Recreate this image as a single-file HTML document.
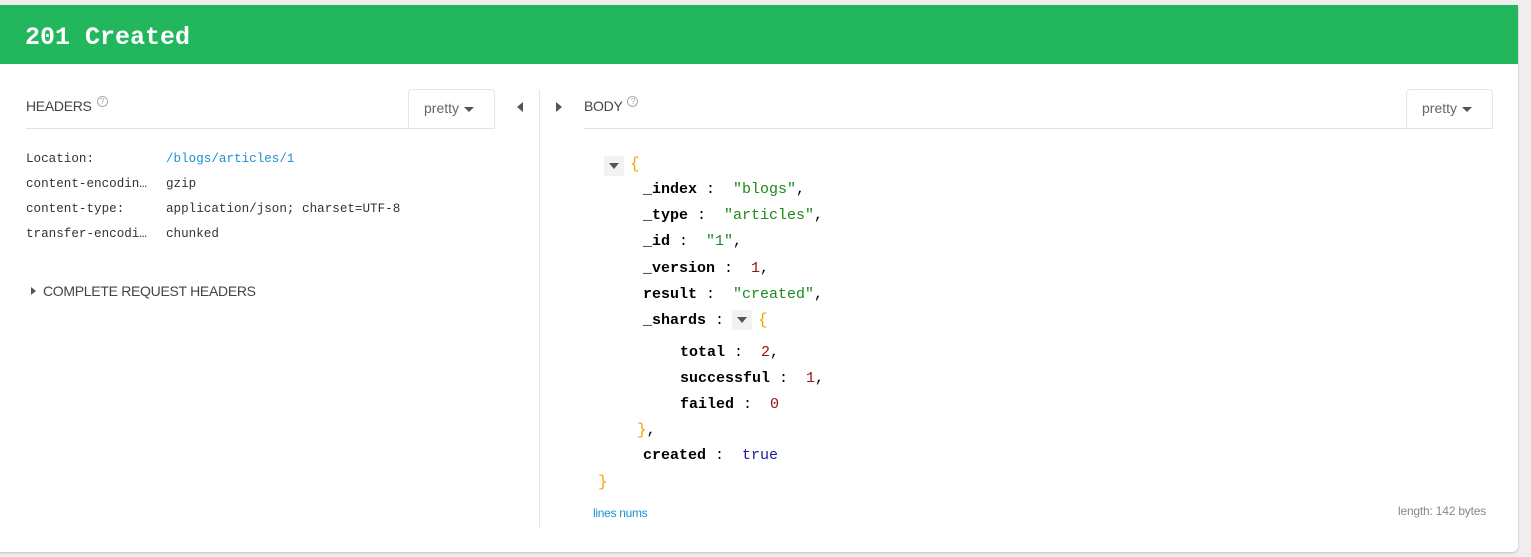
<!DOCTYPE html>
<html><head><meta charset="utf-8"><style>
*{margin:0;padding:0;box-sizing:border-box}
body{width:1531px;height:557px;background:#eeeeee;position:relative;overflow:hidden;font-family:"Liberation Sans",sans-serif}
.card{position:absolute;left:0;top:5px;width:1518px;height:547px;background:#fff;border-radius:0 0 6px 0;box-shadow:0 1px 2px rgba(0,0,0,.2)}
.green{position:absolute;left:0;top:5px;width:1518px;height:59px;background:#22b65d}
.green span{position:absolute;left:25px;top:18px;font-family:"Liberation Mono",monospace;font-weight:bold;font-size:25px;color:#fff}
.a{position:absolute;white-space:nowrap}
.lbl{font-size:14px;color:#444;letter-spacing:-0.3px}
.q{display:inline-block;width:11px;height:11px;border:1px solid #aaa;border-radius:50%;font-size:8px;color:#aaa;text-align:center;line-height:9px;vertical-align:top;margin-left:5px;margin-top:-2px}
.btn{position:absolute;border:1px solid #e6e6e6;border-bottom:none;border-radius:4px 4px 0 0;background:#fff;font-size:14px;color:#666}
.caret{display:inline-block;width:0;height:0;border-left:5px solid transparent;border-right:5px solid transparent;border-top:5px solid #555;vertical-align:middle;margin-left:5px}
.line{position:absolute;height:1px;background:#e3e3e3}
.hm{font-family:"Liberation Mono",monospace;font-size:12.6px;color:#333}
.j{position:absolute;font-family:"Liberation Mono",monospace;font-size:15px;white-space:pre;color:#000}
.k{font-weight:bold}.s{color:#1a8a1a}.n{color:#9a1010}.b{color:#1a1aa0}.br{color:#f5a500;font-size:16px}
.tog{display:inline-block;width:20px;height:20px;background:#f2f2f2;position:absolute}
.tog:after{content:"";position:absolute;left:5px;top:7px;border-left:5px solid transparent;border-right:5px solid transparent;border-top:6px solid #555}
</style></head><body>
<div class="card"></div>
<div class="green"><span>201 Created</span></div>

<div class="a lbl" style="left:26px;top:98px">HEADERS<span class="q">?</span></div>
<div class="btn" style="left:408px;top:89px;width:87px;height:40px;padding:10px 0 0 15px">pretty<span class="caret"></span></div>
<div class="line" style="left:26px;top:128px;width:469px"></div>
<div class="a" style="left:517px;top:102px;border-top:5px solid transparent;border-bottom:5px solid transparent;border-right:6px solid #555"></div>
<div class="a" style="left:539px;top:90px;width:1px;height:437px;background:#e6e6e6"></div>
<div class="a" style="left:556px;top:102px;border-top:5px solid transparent;border-bottom:5px solid transparent;border-left:6px solid #555"></div>

<div class="a hm" style="left:26px;top:152px">Location:</div><div class="a hm" style="left:166px;top:152px;color:#1a8fd6">/blogs/articles/1</div>
<div class="a hm" style="left:26px;top:177px">content-encodin…</div><div class="a hm" style="left:166px;top:177px">gzip</div>
<div class="a hm" style="left:26px;top:202px">content-type:</div><div class="a hm" style="left:166px;top:202px">application/json; charset=UTF-8</div>
<div class="a hm" style="left:26px;top:227px">transfer-encodi…</div><div class="a hm" style="left:166px;top:227px">chunked</div>
<div class="a" style="left:31px;top:287px;border-top:4px solid transparent;border-bottom:4px solid transparent;border-left:5px solid #555"></div>
<div class="a lbl" style="left:43px;top:283px">COMPLETE REQUEST HEADERS</div>

<div class="a lbl" style="left:584px;top:98px">BODY<span class="q">?</span></div>
<div class="btn" style="left:1406px;top:89px;width:87px;height:40px;padding:10px 0 0 15px">pretty<span class="caret"></span></div>
<div class="line" style="left:584px;top:128px;width:909px"></div>

<span class="tog" style="left:604px;top:156px"></span>
<div class="j br" style="left:630px;top:155px">{</div>
<div class="j" style="left:643px;top:181px"><span class="k">_index</span> :  <span class="s">"blogs"</span>,</div>
<div class="j" style="left:643px;top:207px"><span class="k">_type</span> :  <span class="s">"articles"</span>,</div>
<div class="j" style="left:643px;top:233px"><span class="k">_id</span> :  <span class="s">"1"</span>,</div>
<div class="j" style="left:643px;top:260px"><span class="k">_version</span> :  <span class="n">1</span>,</div>
<div class="j" style="left:643px;top:286px"><span class="k">result</span> :  <span class="s">"created"</span>,</div>
<div class="j" style="left:643px;top:312px"><span class="k">_shards</span> : </div>
<span class="tog" style="left:732px;top:310px"></span>
<div class="j br" style="left:758px;top:311px">{</div>
<div class="j" style="left:680px;top:344px"><span class="k">total</span> :  <span class="n">2</span>,</div>
<div class="j" style="left:680px;top:370px"><span class="k">successful</span> :  <span class="n">1</span>,</div>
<div class="j" style="left:680px;top:396px"><span class="k">failed</span> :  <span class="n">0</span></div>
<div class="j" style="left:637px;top:421px"><span class="br">}</span>,</div>
<div class="j" style="left:643px;top:447px"><span class="k">created</span> :  <span class="b">true</span></div>
<div class="j br" style="left:598px;top:473px">}</div>

<div class="a" style="left:593px;top:506px;font-size:12px;color:#1a8fd6;letter-spacing:-0.3px">lines nums</div>
<div class="a" style="left:1398px;top:504px;font-size:12px;color:#888;letter-spacing:-0.2px">length: 142 bytes</div>
</body></html>
